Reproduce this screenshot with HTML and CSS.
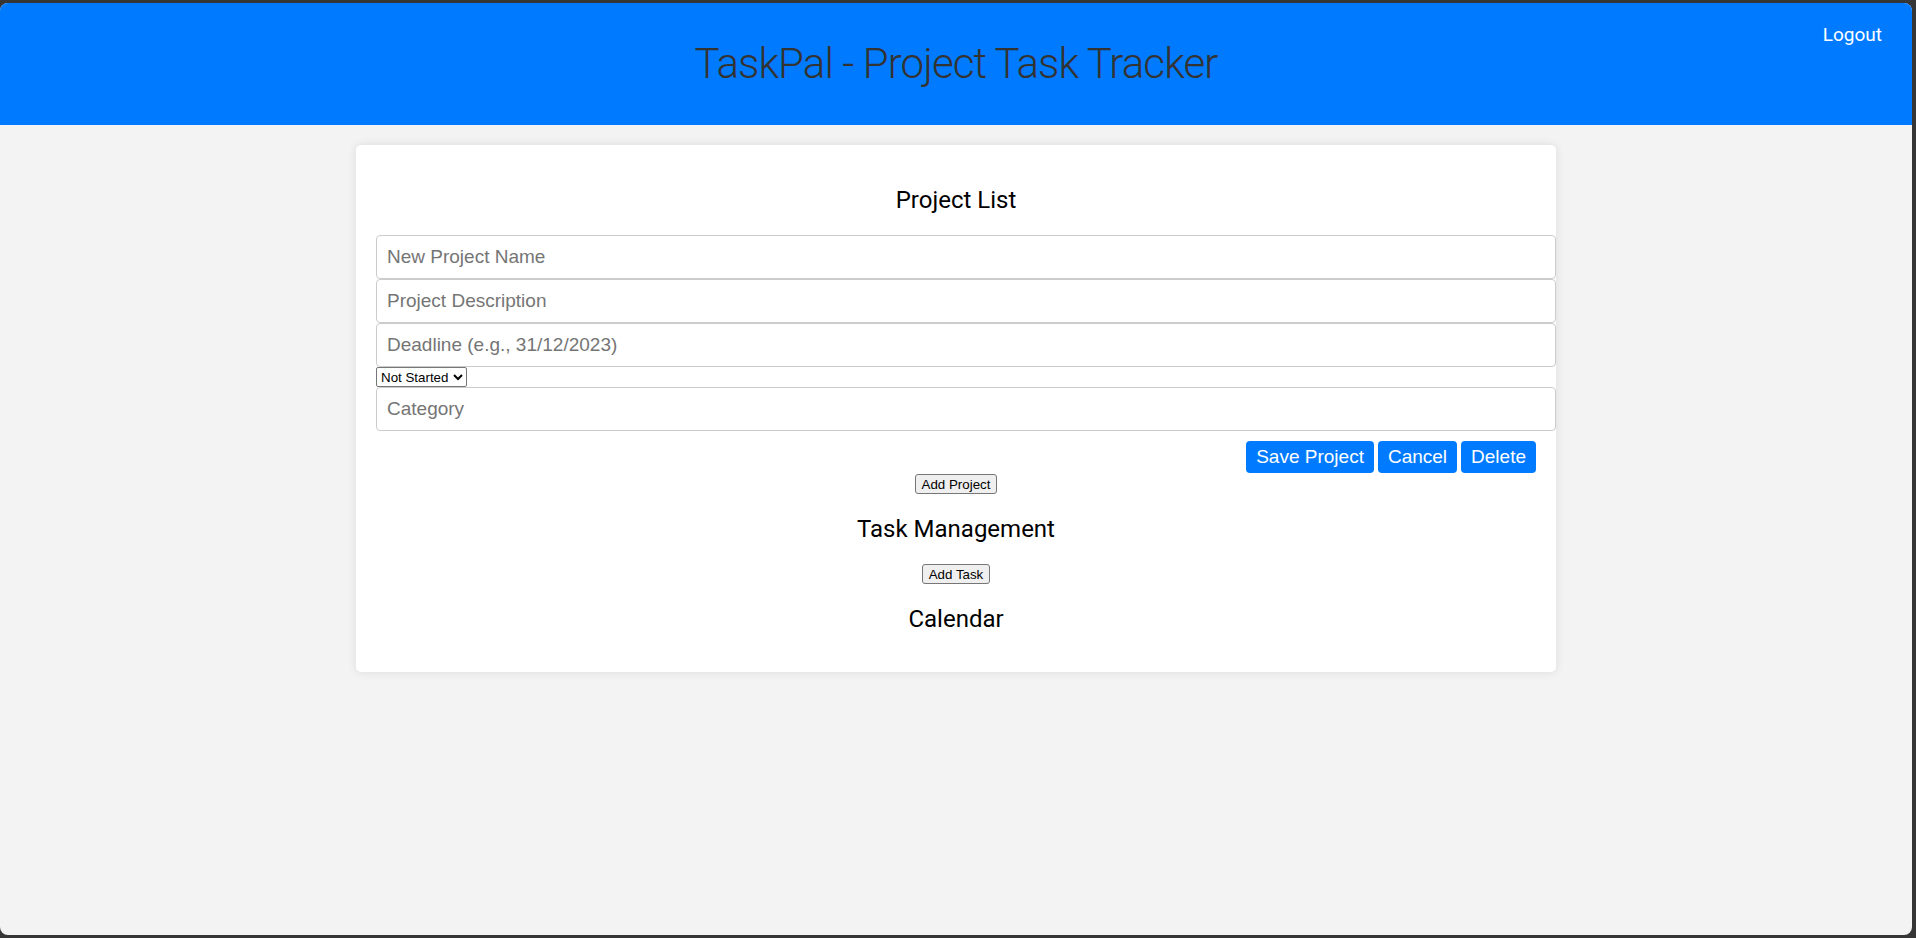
FILE: index.html
```html
<!DOCTYPE html>
<html lang="en">
<head>
<meta charset="utf-8">
<title>TaskPal - Project Task Tracker</title>
<link rel="stylesheet" href="styles.css">
</head>
<body>
<div class="frame">
  <header class="topbar">
    <h1 class="title">TaskPal - Project Task Tracker</h1>
    <a class="logout" href="#">Logout</a>
  </header>
  <main class="card">
    <h2 class="section-title">Project List</h2>
    <input class="field" type="text" placeholder="New Project Name">
    <input class="field" type="text" placeholder="Project Description">
    <input class="field" type="text" placeholder="Deadline (e.g., 31/12/2023)">
    <select class="status">
      <option>Not Started</option>
      <option>In Progress</option>
      <option>Completed</option>
    </select>
    <input class="field" type="text" placeholder="Category">
    <div class="actions">
      <button class="btn">Save Project</button>
      <button class="btn">Cancel</button>
      <button class="btn">Delete</button>
    </div>
    <div class="center"><button class="plain-btn">Add Project</button></div>
    <h2 class="section-title">Task Management</h2>
    <div class="center"><button class="plain-btn">Add Task</button></div>
    <h2 class="section-title">Calendar</h2>
  </main>
</div>
</body>
</html>
```
FILE: styles.css
```css
html, body {
  margin: 0;
  padding: 0;
}
body {
  background: #363636;
  padding: 3px 4px 3px 0;
  font-family: Roboto, "Liberation Sans", sans-serif;
}
.frame {
  height: 932px;
  background: #f3f3f3;
  border-radius: 8px;
  overflow: hidden;
}
.topbar {
  position: relative;
  height: 122px;
  background: #007bff;
  display: flex;
  align-items: center;
  justify-content: center;
}
.title {
  margin: 0;
  font-family: Roboto, sans-serif;
  font-weight: 300;
  font-size: 42px;
  letter-spacing: -0.9px;
  line-height: 52px;
  color: #333;
}
.logout {
  position: absolute;
  top: 20px;
  right: 30px;
  color: #fff;
  text-decoration: none;
  font-family: Roboto, sans-serif;
  font-size: 19px;
}
.card {
  width: 1200px;
  box-sizing: border-box;
  margin: 20px auto 0;
  padding: 20px 20px 18px;
  background: #fff;
  border-radius: 5px;
  box-shadow: 0 0 10px rgba(0, 0, 0, 0.1);
}
.section-title {
  margin: 21px 0;
  font-family: Roboto, sans-serif;
  font-weight: 400;
  font-size: 24px;
  text-align: center;
  color: #000;
}
.field {
  display: block;
  width: 100%;
  height: 22px;
  padding: 10px 8px 10px 10px;
  margin: 0;
  border: 1px solid #ccc;
  border-radius: 4px;
  font-family: "Liberation Sans", Arial, sans-serif;
  font-size: 19px;
  line-height: 22px;
  color: #333;
  background: #fff;
}
.field::placeholder {
  color: #757575;
}
.status {
  display: block;
  margin: 0;
  height: 20px;
  padding: 0;
  font-family: "Liberation Sans", Arial, sans-serif;
  font-size: 13.33px;
  color: #000;
  background: #fff;
  border: 1px solid #767676;
  border-radius: 2px;
}
.actions {
  display: flex;
  justify-content: flex-end;
  gap: 4px;
  margin-top: 10px;
}
.btn {
  height: 32px;
  padding: 0 10px;
  border: none;
  border-radius: 4px;
  background: #007bff;
  color: #fff;
  font-family: "Liberation Sans", Arial, sans-serif;
  font-size: 19px;
  cursor: pointer;
}
.center {
  display: flex;
  justify-content: center;
  margin-top: 1px;
}
.plain-btn {
  height: 20px;
  padding: 0 6px;
  border: 1px solid #767676;
  border-radius: 3px;
  background: #efefef;
  color: #000;
  font-family: "Liberation Sans", Arial, sans-serif;
  font-size: 13.33px;
}
```
